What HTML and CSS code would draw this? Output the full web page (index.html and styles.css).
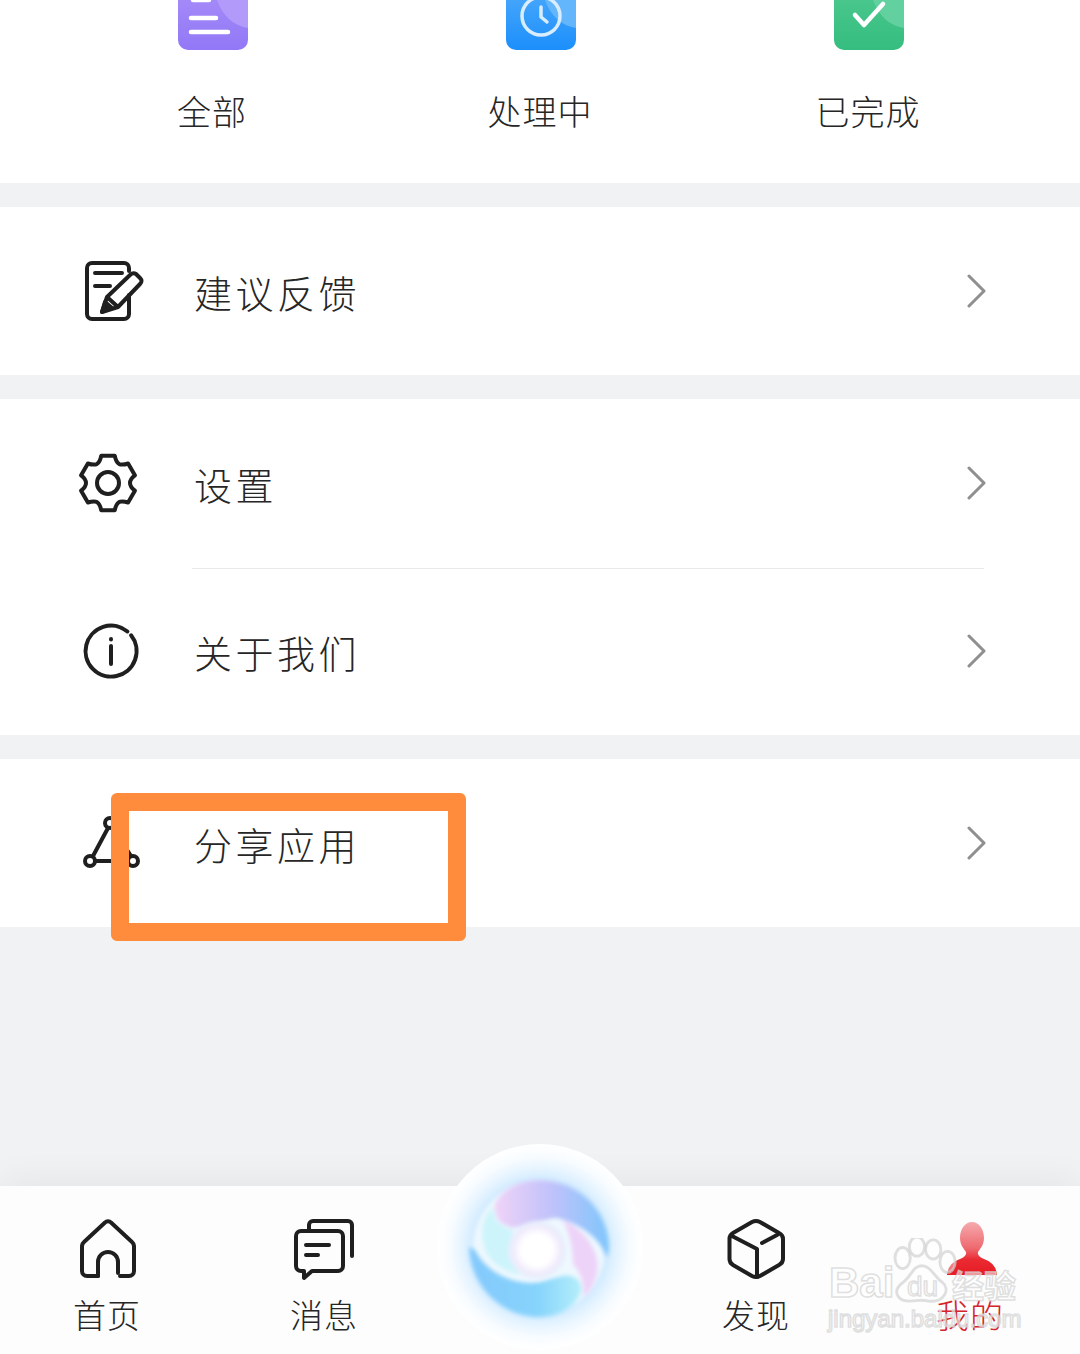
FILE: index.html
```html
<!DOCTYPE html>
<html lang="zh-CN">
<head>
<meta charset="utf-8">
<title>我的</title>
<link rel="stylesheet" href="styles.css">
</head>
<body>
<div class="page">
  <section class="status card">
    <div class="status-item">
      <svg class="status-icon" viewBox="0 0 70 50">
        <defs>
          <linearGradient id="gp" x1="0" y1="0" x2="0" y2="1"><stop offset="0" stop-color="#a68cf8"/><stop offset="1" stop-color="#9278f6"/></linearGradient>
          <linearGradient id="gb" x1="0" y1="0" x2="0" y2="1"><stop offset="0" stop-color="#4aa8fb"/><stop offset="1" stop-color="#1c8ffb"/></linearGradient>
          <linearGradient id="gg" x1="0" y1="0" x2="0" y2="1"><stop offset="0" stop-color="#4cc88f"/><stop offset="1" stop-color="#35bd7f"/></linearGradient>
        </defs>
        <path d="M0 -10H70V40a10 10 0 0 1-10 10H10A10 10 0 0 1 0 40Z" fill="url(#gp)"/>
        <path d="M36 -10H70V28Q44 24 36 -10Z" fill="#b19afa"/>
        <path d="M15 0H31M13 18H38M13 32H50" stroke="#fff" stroke-width="4.500" stroke-linecap="round" fill="none"/>
      </svg>
      <span class="status-label">全部</span>
    </div>
    <div class="status-item">
      <svg class="status-icon" viewBox="0 0 70 50">
        <path d="M0 -10H70V40a10 10 0 0 1-10 10H10A10 10 0 0 1 0 40Z" fill="url(#gb)"/>
        <path d="M36 -10H70V28Q44 24 36 -10Z" fill="#64b6fc"/>
        <circle cx="35" cy="16" r="19" fill="none" stroke="#d8edff" stroke-width="3.500"/>
        <path d="M35 7V17L41 22" stroke="#d8edff" stroke-width="3.500" stroke-linecap="round" stroke-linejoin="round" fill="none"/>
      </svg>
      <span class="status-label">处理中</span>
    </div>
    <div class="status-item">
      <svg class="status-icon" viewBox="0 0 70 50">
        <path d="M0 -10H70V40a10 10 0 0 1-10 10H10A10 10 0 0 1 0 40Z" fill="url(#gg)"/>
        <path d="M36 -10H70V28Q44 24 36 -10Z" fill="#62d09f"/>
        <path d="M21 15L30 25L49 4" stroke="#fff" stroke-width="4.500" stroke-linecap="round" stroke-linejoin="round" fill="none"/>
      </svg>
      <span class="status-label">已完成</span>
    </div>
  </section>

  <section class="card">
    <div class="row">
      <svg class="row-icon" viewBox="0 0 68 60">
        <path d="M51 10V7a5 5 0 0 0-5-5H14a5 5 0 0 0-5 5V53a5 5 0 0 0 5 5H46a5 5 0 0 0 5-5V34"/>
        <path d="M17 12H44M17 25H32"/>
        <path d="M24 51L29 36L52 14Q55 11 58 13L62 17Q65 20 62 23L40 46ZM29 36L40 46"/>
        <path class="pen-tip" d="M24 51L27 41L34 47Z"/>
      </svg>
      <span class="row-label">建议反馈</span>
      <svg class="chevron" viewBox="0 0 20 36"><path d="M3 3L18 18L3 33"/></svg>
    </div>
  </section>

  <section class="card">
    <div class="row">
      <svg class="row-icon" viewBox="0 0 68 60">
        <path d="M23.2 2.800H36.800Q38 9 41 10.900Q44 12.500 50.100 10.500L56.900 22.300Q52 26 52 30Q52 34 56.900 37.700L50.100 49.500Q44 47.500 41 49.100Q38 51 36.800 57.200H23.200Q22 51 19 49.100Q16 47.500 9.900 49.500L3.100 37.700Q8 34 8 30Q8 26 3.100 22.300L9.900 10.500Q16 12.500 19 10.900Q22 9 23.200 2.800Z"/>
        <circle cx="30" cy="30" r="11"/>
      </svg>
      <span class="row-label">设置</span>
      <svg class="chevron" viewBox="0 0 20 36"><path d="M3 3L18 18L3 33"/></svg>
    </div>
    <div class="divider"></div>
    <div class="row">
      <svg class="row-icon" viewBox="0 0 68 60">
        <path d="M53.100 14.300A25.500 25.500 0 1 1 49.400 10.500"/>
        <path d="M33 18V18.500M33 25V43"/>
      </svg>
      <span class="row-label">关于我们</span>
      <svg class="chevron" viewBox="0 0 20 36"><path d="M3 3L18 18L3 33"/></svg>
    </div>
  </section>

  <section class="card">
    <div class="row">
      <svg class="row-icon" viewBox="0 0 68 60">
        <circle cx="12" cy="48" r="5"/><circle cx="55" cy="48" r="5"/><circle cx="32" cy="10" r="5"/>
        <path d="M15 43L30 15M17 48H50M35 15L53 43"/>
      </svg>
      <span class="row-label">分享应用</span>
      <svg class="chevron" viewBox="0 0 20 36"><path d="M3 3L18 18L3 33"/></svg>
    </div>
  </section>

  <div class="filler"></div>

  <nav class="nav">
    <div class="nav-item">
      <svg class="nav-icon" viewBox="-1 0 60 60">
        <path d="M20 57H9a5 5 0 0 1-5-5V27a6 6 0 0 1 2-4L27 3.500a4 4 0 0 1 6 0L54 23a6 6 0 0 1 2 4V52a5 5 0 0 1-5 5H42"/>
        <path d="M20 57V43a10 10 0 0 1 20 0V54"/>
      </svg>
      <span class="nav-label">首页</span>
    </div>
    <div class="nav-item">
      <svg class="nav-icon" viewBox="0 0 60 60">
        <path d="M15 10V6a4 4 0 0 1 4-4H54a4 4 0 0 1 4 4V37"/>
        <path d="M15 12H44a5 5 0 0 1 5 5V47a5 5 0 0 1-5 5H18L10 59V52H7a5 5 0 0 1-5-5V17a5 5 0 0 1 5-5H15Z"/>
        <path d="M12 26H35M12 36H24"/>
      </svg>
      <span class="nav-label">消息</span>
    </div>
    <div class="nav-gap"></div>
    <div class="nav-item">
      <svg class="nav-icon" viewBox="0 0 60 60">
        <path d="M26 3Q30 1 34 3L53 14Q57 16 57 20V40Q57 44 53 46L34 57Q30 59 26 57L7 46Q3.500 44 3.500 40V20Q3.500 16 7 14Z"/>
        <path d="M6 17L31 30V58M36 24L51 16"/>
      </svg>
      <span class="nav-label">发现</span>
    </div>
    <div class="nav-item">
      <svg class="nav-icon" viewBox="-2 0 60 60">
        <defs><linearGradient id="gr" gradientUnits="userSpaceOnUse" x1="0" y1="2" x2="0" y2="56"><stop offset="0" stop-color="#f5adb0"/><stop offset=".5" stop-color="#ee6a70"/><stop offset=".72" stop-color="#ea2a32"/><stop offset="1" stop-color="#e61b23"/></linearGradient></defs>
        <path class="person" d="M18 19C18 10 23 3 30 3C37 3 42 10 42 19C42 26 38 30 36 33Q35 37 42 40Q54 44 55 56H5Q6 44 18 40Q25 37 24 33C22 30 18 26 18 19Z"/>
      </svg>
      <span class="nav-label nav-label-active">我的</span>
    </div>
  </nav>

  <svg class="orb" viewBox="0 0 210 210">
    <defs>
      <radialGradient id="halo"><stop offset="0" stop-color="#d3ecff"/><stop offset=".66" stop-color="#d3ecff"/><stop offset=".76" stop-color="#e6f4ff"/><stop offset=".88" stop-color="#f8fcff"/><stop offset="1" stop-color="#ffffff"/></radialGradient>
      <linearGradient id="sw1" x1="0" y1="0" x2="1" y2="0"><stop offset="0" stop-color="#f0d3f8"/><stop offset=".5" stop-color="#c0c2fa"/><stop offset="1" stop-color="#7fc6fc"/></linearGradient>
      <linearGradient id="sw2" x1="0" y1="0" x2="1" y2="0"><stop offset="0" stop-color="#84c9fc"/><stop offset=".6" stop-color="#86d3fc"/><stop offset="1" stop-color="#b4eefa"/></linearGradient>
      <radialGradient id="core"><stop offset="0" stop-color="#ffffff"/><stop offset=".55" stop-color="#ffffff"/><stop offset=".82" stop-color="#f0eafc"/><stop offset="1" stop-color="#e4f0fc"/></radialGradient>
      <filter id="b2" x="-20%" y="-20%" width="140%" height="140%"><feGaussianBlur stdDeviation="2"/></filter>
    </defs>
    <circle cx="105" cy="105" r="103" fill="url(#halo)"/>
    <circle cx="104" cy="106" r="66" fill="#eef8fe" filter="url(#b2)"/>
    <g filter="url(#b2)">
      <path d="M58 65C46 76 44 95 52 112C60 124 72 130 85 133L78 88C66 85 58 78 58 65Z" fill="#cdf4fb"/>
      <path d="M128 78C150 88 166 110 162 130C160 142 155 150 148 155C150 140 145 130 138 122C138 105 134 90 128 78Z" fill="#eed3f8"/>
      <path d="M60 62C68 46 85 38 104 38C145 38 174 70 174 106L172 116C165 95 145 82 122 76C110 76 100 84 88 85C72 88 58 80 60 62Z" fill="url(#sw1)"/>
      <path d="M34 105C36 148 70 175 104 175C125 175 140 165 146 150C148 138 138 132 128 134C116 136 108 141 95 141C72 140 50 128 40 108Z" fill="url(#sw2)"/>
    </g>
    <circle cx="102" cy="108" r="29" fill="url(#core)" filter="url(#b2)"/>
  </svg>

  <div class="highlight"></div>

  <div class="watermark">
    <svg class="paw" viewBox="0 0 130 90">
      <ellipse cx="17" cy="21" rx="8" ry="11"/>
      <ellipse cx="32" cy="9" rx="8" ry="10"/>
      <ellipse cx="49" cy="12" rx="8" ry="10"/>
      <ellipse cx="64" cy="25" rx="8" ry="11"/>
      <path d="M37 29C28 29 26 40 18 46C6 54 10 66 24 66C32 66 36 64 44 66C60 68 68 54 58 46C50 40 46 29 37 29Z"/>
    </svg>
    <span class="wm-bai">Bai</span>
    <span class="wm-du">du</span>
    <span class="wm-jy">经验</span>
    <span class="wm-url">jingyan.baidu.com</span>
  </div>
</div>
</body>
</html>
```

FILE: styles.css
```css
* { box-sizing: border-box; }
html, body { margin: 0; padding: 0; }
body {
  width: 1080px;
  height: 1354px;
  overflow: hidden;
  font-family: "Noto Sans CJK SC", "Liberation Sans", sans-serif;
  font-weight: 300;
  color: #262626;
  background: #f1f2f4;
}
.page {
  position: relative;
  width: 1080px;
  height: 1354px;
  display: flex;
  flex-direction: column;
  gap: 24px;
  overflow: hidden;
}
.card { background: #fff; }

.status {
  height: 183px;
  display: grid;
  grid-template-columns: repeat(3, 1fr);
  padding: 0 47px 0 49px;
}
.status-item {
  display: flex;
  flex-direction: column;
  align-items: center;
}
.status-icon { width: 70px; height: 50px; display: block; }
.status-label {
  margin-top: 38px;
  margin-right: 2px;
  font-size: 34px;
  line-height: 46px;
  letter-spacing: 1px;
}

.row {
  position: relative;
  height: 168px;
  display: flex;
  align-items: center;
  padding-left: 78px;
  padding-right: 94px;
}
.row-icon {
  width: 68px;
  height: 60px;
  flex: none;
  overflow: visible;
  fill: none;
  stroke: #1f1f1f;
  stroke-width: 4;
  stroke-linecap: round;
  stroke-linejoin: round;
}
.pen-tip { fill: #1f1f1f; }
.row-label {
  margin-left: 48px;
  padding-top: 2px;
  font-size: 38px;
  line-height: 50px;
  letter-spacing: 3.500px;
  flex: 1;
}
.chevron {
  width: 20px;
  height: 36px;
  flex: none;
  fill: none;
  stroke: #8f8f8f;
  stroke-width: 3;
  stroke-linecap: round;
  stroke-linejoin: round;
}
.divider {
  height: 1px;
  margin: 1px 96px -2px 192px;
  background: #e9e9eb;
}
.filler { flex: 1; margin-bottom: -24px; }

.nav {
  height: 168px;
  flex: none;
  background: #fdfdfd;
  box-shadow: 0 -4px 36px rgba(0, 0, 0, .06);
  display: grid;
  grid-template-columns: 214px 220px 215px 214px 214px;
  padding-top: 33px;
}
.nav-item {
  display: flex;
  flex-direction: column;
  align-items: center;
}
.nav-icon {
  width: 60px;
  height: 60px;
  overflow: visible;
  fill: none;
  stroke: #1f1f1f;
  stroke-width: 4;
  stroke-linecap: round;
  stroke-linejoin: round;
}
.person { fill: url(#gr); stroke: none; }
.nav-label {
  margin-top: 14px;
  font-size: 33px;
  line-height: 42px;
  letter-spacing: 1px;
}
.nav-label-active { color: #d4232a; }

.orb {
  position: absolute;
  left: 435px;
  top: 1142px;
  width: 210px;
  height: 210px;
}
.highlight {
  position: absolute;
  left: 111px;
  top: 793px;
  width: 355px;
  height: 148px;
  border: 18px solid #ff8c3c;
  border-radius: 6px;
}

.watermark {
  position: absolute;
  left: 820px;
  top: 1230px;
  width: 210px;
  height: 105px;
  color: rgba(255, 255, 255, .55);
  -webkit-text-stroke: 1.500px rgba(210, 210, 210, .7);
  font-family: "Liberation Sans", "Noto Sans CJK SC", sans-serif;
  font-weight: 400;
}
.paw {
  position: absolute;
  left: 66px;
  top: 8px;
  width: 125px;
  height: 86px;
  fill: rgba(255, 255, 255, .4);
  stroke: rgba(210, 210, 210, .7);
  stroke-width: 3;
}
.wm-bai, .wm-du, .wm-jy, .wm-url { position: absolute; white-space: nowrap; }
.wm-bai { left: 9px; top: 31px; font-size: 42px; line-height: 44px; font-weight: 700; letter-spacing: 0; }
.wm-du { left: 87px; top: 43px; font-size: 28px; line-height: 28px; }
.wm-jy { left: 132px; top: 36px; font-size: 32px; line-height: 36px; font-weight: 700; font-family: "Noto Sans CJK SC", sans-serif; }
.wm-url { left: 8px; top: 74px; font-size: 24px; line-height: 30px; }
```
